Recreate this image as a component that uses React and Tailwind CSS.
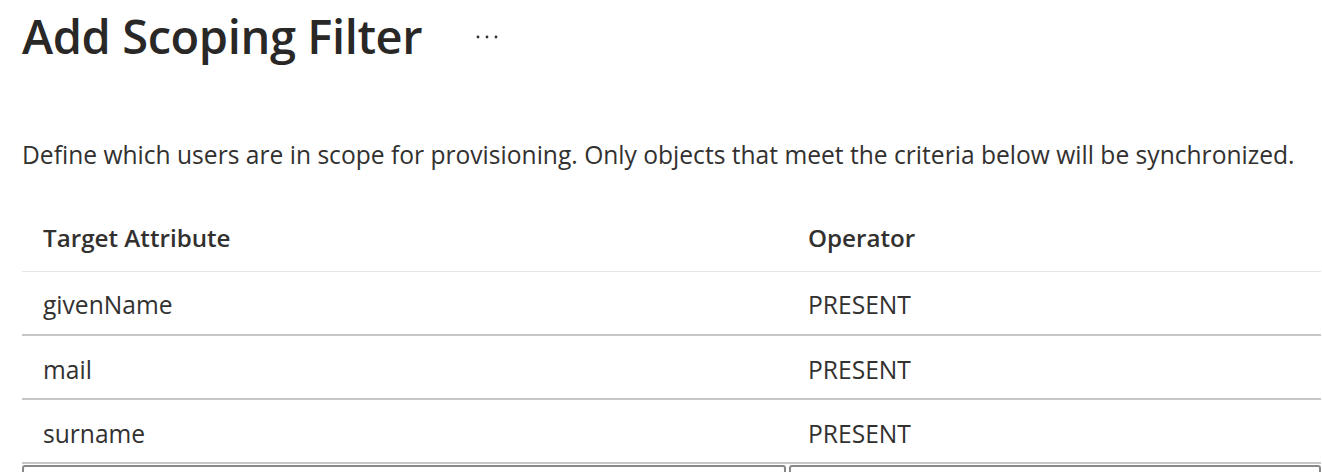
import { useState } from "react";

const rows = [
  { attribute: "givenName", operator: "PRESENT" },
  { attribute: "mail", operator: "PRESENT" },
  { attribute: "surname", operator: "PRESENT" },
];

export default function App() {
  const [filters] = useState(rows);

  return (
    <div
      className="w-[1322px] h-[472px] overflow-hidden bg-white text-[#323130]"
      style={{ fontFamily: '"Open Sans", "Noto Sans", sans-serif' }}
    >
      <div className="pl-[22px]">
        <div className="flex items-center h-[72px]">
          <h1 className="text-[47px] font-semibold leading-none tracking-[-0.4px] text-[#292827]">
            Add Scoping Filter
          </h1>
          {/* more actions */}
          <button className="ml-[54px] mt-[2px] h-[20px] flex items-center">
            <svg width="22" height="6" viewBox="0 0 22 6" fill="#323130">
              <circle cx="2" cy="3" r="1.4" />
              <circle cx="11" cy="3" r="1.4" />
              <circle cx="20" cy="3" r="1.4" />
            </svg>
          </button>
        </div>

        <p className="mt-[68px] text-[24.6px] leading-[30px]">
          Define which users are in scope for provisioning. Only objects that meet the criteria below will be synchronized.
        </p>

        <table className="mt-[36px] w-[1299px] border-collapse text-[24.6px]">
          <thead>
            <tr className="h-[65px] border-b border-[#e6e6e6]">
              <th className="w-[766px] text-left font-semibold text-[24.2px] pl-[21px]">Target Attribute</th>
              <th className="text-left font-semibold text-[24.2px] pl-[20px]">Operator</th>
            </tr>
          </thead>
          <tbody>
            {filters.map((row) => (
              <tr key={row.attribute} className="h-[64px] border-b-2 border-[#c8c8c8]">
                <td className="pl-[21px] pt-[6px]">{row.attribute}</td>
                <td className="pl-[20px] pt-[6px]">{row.operator}</td>
              </tr>
            ))}
          </tbody>
        </table>

        <div className="flex gap-[3px] mt-[1px] w-[1299px]">
          <input className="w-[764px] h-[40px] border-2 border-[#8a8886] rounded-[3px]" />
          <input className="flex-1 h-[40px] border-2 border-[#8a8886] rounded-[3px]" />
        </div>
      </div>
    </div>
  );
}
